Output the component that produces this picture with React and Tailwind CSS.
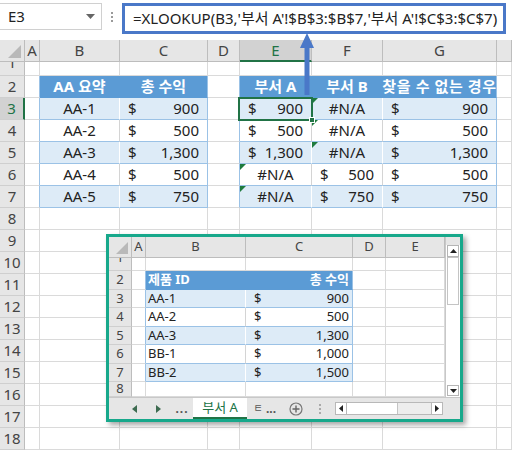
import React from 'react';

const W = ['w-[25px]', 'w-[15px]', 'w-[80px]', 'w-[88px]', 'w-[32px]', 'w-[72px]', 'w-[71px]', 'w-[114px]', 'w-[15px]'];
const IW = ['w-[23px]', 'w-[14px]', 'w-[100px]', 'w-[107px]', 'w-[33px]', 'w-[59px]'];

const GRID = 'border-[#dadada]';

const Money = ({ v, small }) => (
  <div className={small ? 'flex w-full justify-between pl-[8px] pr-[3px]' : 'flex w-full justify-between pl-[8px] pr-[8px]'}>
    <span>$</span>
    <span>{v}</span>
  </div>
);

const Tri = () => (
  <span className="absolute left-0 top-0 h-0 w-0 border-t-[6px] border-r-[6px] border-t-[#1e7b3e] border-r-transparent" />
);

// main sheet rows 3..7
const t1 = [
  ['AA-1', '900'],
  ['AA-2', '500'],
  ['AA-3', '1,300'],
  ['AA-4', '500'],
  ['AA-5', '750'],
];
const t2 = [
  [{ m: '900' }, { na: true, tri: true }, '900'],
  [{ m: '500' }, { na: true, tri: true }, '500'],
  [{ m: '1,300' }, { na: true, tri: true }, '1,300'],
  [{ na: true, tri: true }, { m: '500' }, '500'],
  [{ na: true, tri: true }, { m: '750' }, '750'],
];

function Cell({ i, cls = '', children }) {
  return (
    <div className={`${W[i]} relative flex shrink-0 items-center overflow-visible whitespace-nowrap border-r border-b ${cls}`}>
      {children}
    </div>
  );
}

function RowHead({ n, sel, h = 'h-[22px]' }) {
  return (
    <div
      className={`${W[0]} ${h} flex shrink-0 items-center justify-center border-b ${
        sel ? 'border-r-2 border-r-[#217346] bg-[#d2d2d2] text-[#217346]' : 'border-r border-r-[#bdbdbd] bg-[#e6e6e6] text-[#444]'
      } border-b-[#cfcfcf]`}
    >
      {n}
    </div>
  );
}

function TableVal({ d }) {
  if (typeof d === 'string') return <Money v={d} />;
  if (d.na) return (
    <>
      {d.tri && <Tri />}
      <span className="w-full text-center">#N/A</span>
    </>
  );
  return <Money v={d.m} />;
}

function MainSheet() {
  const cols = ['A', 'B', 'C', 'D', 'E', 'F', 'G', ''];
  const rows = [];
  for (let r = 2; r <= 18; r++) {
    const inT = r >= 2 && r <= 7;
    const light = r === 3 || r === 5 || r === 7;
    const bg = light ? 'bg-[#ddebf7]' : 'bg-white';
    const inner = light ? 'border-r-white' : 'border-r-[#d4d4d4]';
    let cells;
    if (!inT) {
      cells = cols.map((c, i) => <Cell key={i} i={i + 1} cls={GRID} />);
    } else if (r === 2) {
      cells = [
        <Cell key="a" i={1} cls="border-r-[#9bc2e6] border-b-[#dadada]" />,
        <Cell key="b" i={2} cls="justify-center bg-[#5b9bd5] border-[#5b9bd5] font-bold text-white">AA 요약</Cell>,
        <Cell key="c" i={3} cls="justify-center bg-[#5b9bd5] border-r-[#9bc2e6] border-b-[#5b9bd5] font-bold text-white">총 수익</Cell>,
        <Cell key="d" i={4} cls="border-r-[#9bc2e6] border-b-[#dadada]" />,
        <Cell key="e" i={5} cls="justify-center bg-[#5b9bd5] border-[#5b9bd5] font-bold text-white">부서 A</Cell>,
        <Cell key="f" i={6} cls="justify-center bg-[#5b9bd5] border-[#5b9bd5] font-bold text-white">부서 B</Cell>,
        <Cell key="g" i={7} cls="justify-center overflow-hidden bg-[#5b9bd5] border-r-[#9bc2e6] border-b-[#5b9bd5] tracking-[0.6px] font-bold text-white">찾을 수 없는 경우</Cell>,
        <Cell key="h" i={8} cls={GRID} />,
      ];
    } else {
      const a = t1[r - 3];
      const b = t2[r - 3];
      cells = [
        <Cell key="a" i={1} cls="border-r-[#9bc2e6] border-b-[#dadada]" />,
        <Cell key="b" i={2} cls={`justify-center ${bg} ${inner} border-b-[#9bc2e6]`}>{a[0]}</Cell>,
        <Cell key="c" i={3} cls={`${bg} border-r-[#9bc2e6] border-b-[#9bc2e6]`}><Money v={a[1]} /></Cell>,
        <Cell key="d" i={4} cls="border-r-[#9bc2e6] border-b-[#dadada]" />,
        <Cell key="e" i={5} cls={`${bg} ${inner} border-b-[#9bc2e6]`}><TableVal d={b[0]} /></Cell>,
        <Cell key="f" i={6} cls={`${bg} ${inner} border-b-[#9bc2e6]`}><TableVal d={b[1]} /></Cell>,
        <Cell key="g" i={7} cls={`${bg} border-r-[#9bc2e6] border-b-[#9bc2e6]`}><Money v={b[2]} /></Cell>,
        <Cell key="h" i={8} cls={GRID} />,
      ];
    }
    rows.push(
      <div key={r} className="flex h-[22px]">
        <RowHead n={r} sel={r === 3} />
        {cells}
      </div>
    );
  }

  return (
    <div className="flex flex-col text-[15px] text-[#222]">
      {/* column headers */}
      <div className="flex h-[22px] bg-[#e6e6e6] text-[#444]">
        <div className={`${W[0]} relative shrink-0 border-r border-b border-[#bdbdbd]`}>
          <svg className="absolute bottom-[3px] right-[3px]" width="13" height="13" viewBox="0 0 13 13">
            <polygon points="13,0 13,13 0,13" fill="#b9b9b9" />
          </svg>
        </div>
        {cols.map((c, i) => (
          <div
            key={i}
            className={`${W[i + 1]} flex shrink-0 items-center justify-center ${
              c === 'E'
                ? 'border-r border-r-[#bdbdbd] border-b-2 border-b-[#217346] bg-[#d2d2d2] text-[#217346]'
                : 'border-r border-b border-[#bdbdbd]'
            }`}
          >
            {c}
          </div>
        ))}
      </div>
      {/* row 1, partly hidden */}
      <div className="flex h-[14px]">
        <div className={`${W[0]} shrink-0 overflow-hidden border-r border-b border-r-[#bdbdbd] border-b-[#cfcfcf] bg-[#e6e6e6] text-center text-[#444]`}>
          <div className="-mt-[11px] leading-[22px]">1</div>
        </div>
        {cols.map((c, i) => (
          <Cell key={i} i={i + 1} cls={GRID} />
        ))}
      </div>
      {rows}
    </div>
  );
}

function InnerSheet() {
  const cols = ['A', 'B', 'C', 'D', 'E'];
  const data = [
    ['AA-1', '900'],
    ['AA-2', '500'],
    ['AA-3', '1,300'],
    ['BB-1', '1,000'],
    ['BB-2', '1,500'],
  ];
  const C = ({ i, cls = '', h = 'h-[18.5px]', children }) => (
    <div className={`${IW[i]} ${h} flex shrink-0 items-center whitespace-nowrap border-r border-b ${cls}`}>{children}</div>
  );
  const H = ({ n, h = 'h-[18.5px]' }) => (
    <div className={`${IW[0]} ${h} flex shrink-0 items-center justify-center overflow-hidden border-r border-b border-r-[#bdbdbd] border-b-[#cfcfcf] bg-[#e6e6e6] text-[#444]`}>
      {n}
    </div>
  );
  return (
    <div className="flex w-[336px] flex-col">
      <div className="flex h-[21px] bg-[#e6e6e6] text-[#444]">
        <div className={`${IW[0]} relative shrink-0 border-r border-b border-[#bdbdbd]`}>
          <svg className="absolute bottom-[3px] right-[3px]" width="12" height="12" viewBox="0 0 12 12">
            <polygon points="12,0 12,12 0,12" fill="#b9b9b9" />
          </svg>
        </div>
        {cols.map((c, i) => (
          <div key={c} className={`${IW[i + 1]} flex shrink-0 items-center justify-center border-r border-b border-[#bdbdbd]`}>
            {c}
          </div>
        ))}
      </div>
      <div className="flex h-[13px]">
        <div className={`${IW[0]} shrink-0 overflow-hidden border-r border-b border-r-[#bdbdbd] border-b-[#cfcfcf] bg-[#e6e6e6] text-center text-[#444]`}>
          <div className="-mt-[10px] leading-[19px]">1</div>
        </div>
        {cols.map((c, i) => (
          <C key={c} i={i + 1} h="h-[13px]" cls={GRID} />
        ))}
      </div>
      <div className="flex">
        <H n={2} />
        <C i={1} cls="border-r-[#9bc2e6] border-b-[#dadada]" />
        <C i={2} cls="bg-[#5b9bd5] border-[#5b9bd5] pl-[2px] font-bold text-white">제품 ID</C>
        <C i={3} cls="justify-end bg-[#5b9bd5] border-r-[#9bc2e6] border-b-[#5b9bd5] pr-[3px] font-bold text-white">총 수익</C>
        <C i={4} cls={GRID} />
        <C i={5} cls={GRID} />
      </div>
      {data.map((d, k) => {
        const light = k % 2 === 0;
        const bg = light ? 'bg-[#ddebf7]' : 'bg-white';
        return (
          <div key={d[0]} className="flex">
            <H n={k + 3} />
            <C i={1} cls="border-r-[#9bc2e6] border-b-[#dadada]" />
            <C i={2} cls={`${bg} pl-[2px] ${light ? 'border-r-white' : 'border-r-[#d4d4d4]'} border-b-[#9bc2e6]`}>{d[0]}</C>
            <C i={3} cls={`${bg} border-r-[#9bc2e6] border-b-[#9bc2e6]`}>
              <Money v={d[1]} small />
            </C>
            <C i={4} cls={GRID} />
            <C i={5} cls={GRID} />
          </div>
        );
      })}
      <div className="flex">
        <H n={8} h="h-[15px]" />
        {cols.map((c, i) => (
          <C key={c} i={i + 1} h="h-[15px]" cls={GRID} />
        ))}
      </div>
    </div>
  );
}

function VScroll() {
  return (
    <div className="flex w-[15px] flex-col border-l border-[#c8c8c8] bg-white">
      <div className="h-[8px] bg-[#e6e6e6]" />
      <div className="mx-[1px] flex h-[12px] items-center justify-center border border-[#b5b5b5] bg-white">
        <svg width="7" height="4" viewBox="0 0 7 4"><polygon points="0,4 3.5,0 7,4" fill="#222" /></svg>
      </div>
      <div className="mx-[1px] h-[48px] border border-[#c4c4c4] bg-white" />
      <div className="flex-1" />
      <div className="mx-[1px] mb-[1px] flex h-[11px] items-center justify-center border border-[#b5b5b5] bg-white">
        <svg width="7" height="4" viewBox="0 0 7 4"><polygon points="0,0 3.5,4 7,0" fill="#222" /></svg>
      </div>
    </div>
  );
}

function TabBar() {
  return (
    <div className="flex h-[22px] items-center border-t border-[#c8c8c8] bg-[#e6e6e6] text-[13px] text-[#444]">
      <div className="w-[19px]" />
      <div className="flex w-[12px] justify-center">
        <svg width="5" height="8" viewBox="0 0 5 8"><polygon points="5,0 0,4 5,8" fill="#3d6b50" /></svg>
      </div>
      <div className="w-[12px]" />
      <div className="flex w-[12px] justify-center">
        <svg width="5" height="8" viewBox="0 0 5 8"><polygon points="0,0 5,4 0,8" fill="#3d6b50" /></svg>
      </div>
      <div className="w-[8px]" />
      <div className="w-[20px] text-center text-[12px] font-bold leading-none tracking-[1px] text-[#555]">...</div>
      <div className="w-[1px]" />
      <div className="flex h-full w-[54px] items-center justify-center border-b-2 border-[#217346] bg-white text-[#217346]">부서 A</div>
      <div className="w-[5px]" />
      <div className="w-[12px] text-center text-[10px] text-[#555]">ㅌ</div>
      <div className="w-[14px] text-center text-[12px] font-bold leading-none text-[#555]">...</div>
      <div className="w-[10px]" />
      <div className="flex w-[16px] justify-center">
        <svg width="14" height="14" viewBox="0 0 14 14">
          <circle cx="7" cy="7" r="6" fill="none" stroke="#777" strokeWidth="1.2" />
          <path d="M7 3.5v7M3.5 7h7" stroke="#666" strokeWidth="1.4" />
        </svg>
      </div>
      <div className="w-[10px]" />
      <div className="flex w-[12px] flex-col items-center gap-[2px]">
        <span className="h-[2px] w-[2px] bg-[#aaa]" />
        <span className="h-[2px] w-[2px] bg-[#aaa]" />
        <span className="h-[2px] w-[2px] bg-[#aaa]" />
      </div>
      <div className="w-[9px]" />
      <div className="flex h-[13px] w-[108px] border border-[#b8b8b8] bg-[#ededed]">
        <div className="flex w-[11px] items-center justify-center border-r border-[#b8b8b8] bg-white">
          <svg width="4" height="7" viewBox="0 0 4 7"><polygon points="4,0 0,3.5 4,7" fill="#222" /></svg>
        </div>
        <div className="w-[51px] border-r border-[#c4c4c4] bg-white" />
        <div className="flex-1" />
        <div className="flex w-[11px] items-center justify-center border-l border-[#b8b8b8] bg-white">
          <svg width="4" height="7" viewBox="0 0 4 7"><polygon points="0,0 4,3.5 0,7" fill="#222" /></svg>
        </div>
      </div>
    </div>
  );
}

export default function App() {
  return (
    <div className="relative h-[455px] w-[512px] overflow-hidden bg-white font-['Noto_Sans','Noto_Sans_CJK_KR',sans-serif]">
      {/* name box + formula bar */}
      <div className="flex h-[40px] items-start pt-[3px]">
        <div className="flex h-[27px] w-[102px] items-center justify-between border border-l-0 border-[#d0d0d0] pl-[8px] pr-[6px] text-[15px] text-[#222]">
          <span>E3</span>
          <svg width="9" height="5" viewBox="0 0 9 5"><polygon points="0,0 9,0 4.5,5" fill="#666" /></svg>
        </div>
        <div className="flex w-[20px] flex-col items-center gap-[2px] pt-[9px]">
          <span className="h-[2px] w-[2px] bg-[#9a9a9a]" />
          <span className="h-[2px] w-[2px] bg-[#9a9a9a]" />
          <span className="h-[2px] w-[2px] bg-[#9a9a9a]" />
        </div>
        <div className="flex h-[31px] w-[384px] items-center border-[3px] border-[#4a78c8] bg-white pl-[8px] text-[15px] text-[#222] whitespace-nowrap">
          =XLOOKUP(B3,'부서 A'!$B$3:$B$7,'부서 A'!$C$3:$C$7)
        </div>
      </div>

      <MainSheet />

      {/* active cell E3 */}
      <div className="absolute left-[238px] top-[97px] h-[24px] w-[75px] border-2 border-[#217346]" />
      <div className="absolute left-[309px] top-[117px] h-[6px] w-[6px] border border-white bg-[#217346]" />

      {/* arrow from formula bar to cell */}
      <svg className="absolute left-[300px] top-[33px]" width="14" height="62" viewBox="0 0 14 62">
        <rect x="4.5" y="12" width="5" height="50" fill="#4a78c8" />
        <polygon points="0,15 7,0 14,15" fill="#4a78c8" />
      </svg>

      {/* pasted picture of the lookup sheet */}
      <div className="absolute left-[106px] top-[234px] flex h-[188px] w-[357px] flex-col border-[3px] border-[#17a88b] bg-white text-[13px] text-[#222] shadow-[3px_3px_5px_rgba(0,0,0,0.35)]">
        <div className="flex">
          <InnerSheet />
          <VScroll />
        </div>
        <TabBar />
      </div>
    </div>
  );
}
